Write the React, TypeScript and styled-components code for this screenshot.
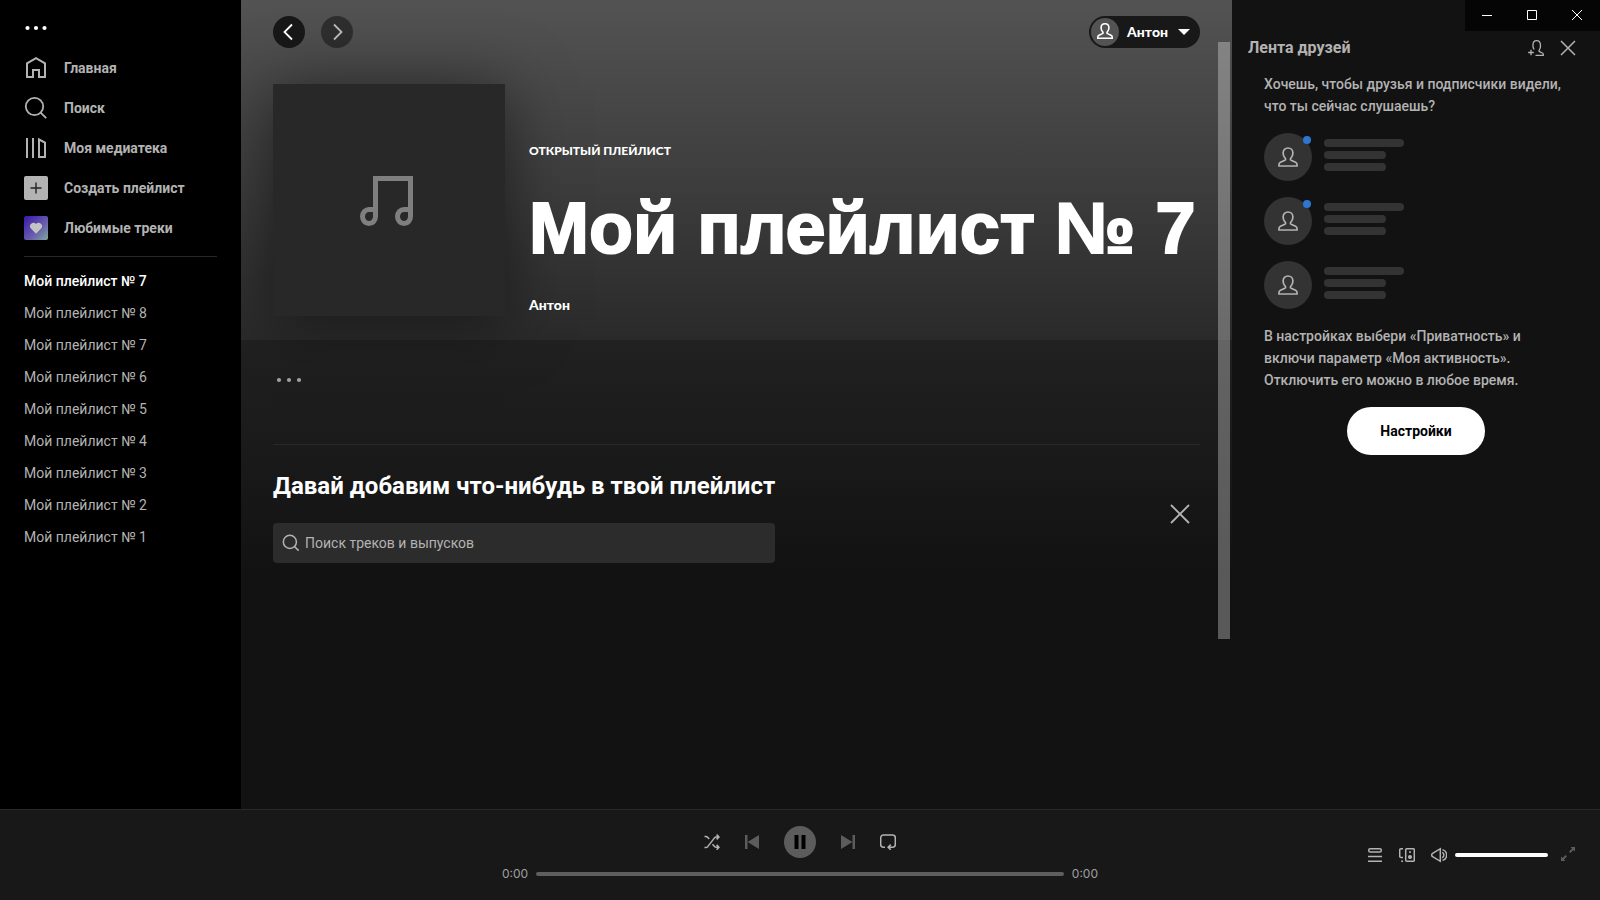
import React from "react";
import styled, { createGlobalStyle } from "styled-components";

const GlobalStyle = createGlobalStyle`
  *, *::before, *::after { box-sizing: border-box; }
  body {
    margin: 0;
    background: #121212;
    color: #fff;
    font-family: Roboto, "Liberation Sans", sans-serif;
    font-size: 14px;
    line-height: 16px;
  }
  h1, h2, p, ul { margin: 0; padding: 0; }
  ul { list-style: none; }
  a { color: inherit; text-decoration: none; }
  button {
    border: 0;
    padding: 0;
    background: none;
    color: inherit;
    font: inherit;
    cursor: pointer;
  }
  svg { display: block; flex: none; }
`;

const displayFont = `Lato, "Liberation Sans", sans-serif`;

const Page = styled.div`
  display: grid;
  grid-template-columns: 241px minmax(0, 1fr) 368px;
  grid-template-rows: minmax(0, 1fr) auto;
  min-height: 100vh;
`;

/* ---------- Sidebar ---------- */

const Sidebar = styled.nav`
  background: #000;
  padding: 16px 24px 24px;
  color: #b3b3b3;
`;

const MenuButton = styled.button`
  display: block;
  height: 24px;
  color: #fff;
`;

const NavList = styled.ul`
  padding: 8px 0;
  font-weight: 700;
`;

const NavLink = styled.a`
  display: flex;
  align-items: center;
  gap: 16px;
  height: 40px;
`;

const NavTile = styled.span<{ $liked?: boolean }>`
  display: grid;
  place-items: center;
  width: 24px;
  height: 24px;
  border-radius: 2px;
  background: ${(p) =>
    p.$liked ? "linear-gradient(135deg, #3a16a8, #6a5fae 60%, #7fa79b)" : "#b3b3b3"};
  color: ${(p) => (p.$liked ? "#c4c4c4" : "#222")};
`;

const PlaylistList = styled.ul`
  border-top: 1px solid #282828;
  padding-top: 8px;
`;

const PlaylistLink = styled.a<{ $active?: boolean }>`
  display: block;
  line-height: 32px;
  white-space: nowrap;
  font-weight: ${(p) => (p.$active ? 500 : 400)};
  color: ${(p) => (p.$active ? "#fff" : "#b3b3b3")};
`;

/* ---------- Main ---------- */

const Main = styled.main`
  position: relative;
  background: #121212;
`;

const Hero = styled.header`
  display: flex;
  flex-direction: column;
  gap: 36px;
  padding: 16px 32px 24px;
  background: linear-gradient(#535353, #2a2a2a);
`;

const TopBar = styled.div`
  display: flex;
  align-items: center;
  gap: 16px;
`;

const RoundButton = styled.button<{ $dim?: boolean }>`
  display: grid;
  place-items: center;
  width: 32px;
  height: 32px;
  border-radius: 50%;
  background: #181818;
  opacity: ${(p) => (p.$dim ? 0.6 : 1)};
`;

const UserButton = styled.button`
  display: flex;
  align-items: center;
  gap: 8px;
  height: 32px;
  margin-left: auto;
  padding: 0 10px 0 2px;
  border-radius: 16px;
  background: #181818;
  font-family: ${displayFont};
  font-weight: 900;
`;

const UserAvatar = styled.span`
  display: grid;
  place-items: center;
  width: 28px;
  height: 28px;
  padding-bottom: 2px;
  border-radius: 50%;
  background: #535353;
`;

const UserName = styled.span`
  padding-right: 2px;
`;

const PlaylistInfo = styled.div`
  display: flex;
  gap: 24px;
`;

const Cover = styled.div`
  display: grid;
  place-items: center;
  flex: none;
  width: 232px;
  height: 232px;
  background: #282828;
  box-shadow: 0 4px 60px rgba(0, 0, 0, 0.5);
  color: #7f7f7f;
`;

const InfoText = styled.div`
  display: flex;
  flex-direction: column;
  justify-content: flex-end;
  min-width: 0;
  white-space: nowrap;
`;

const Kind = styled.p`
  font-family: ${displayFont};
  font-size: 12px;
  font-weight: 900;
`;

const Title = styled.h1`
  padding: 25px 0 22px;
  font-family: "Liberation Sans", Arial, sans-serif;
  font-size: 72px;
  line-height: 88px;
  font-weight: 700;
  -webkit-text-stroke: 2px #fff;
`;

const Owner = styled.a`
  font-family: ${displayFont};
  line-height: 22px;
  font-weight: 900;
`;

const Body = styled.div`
  padding: 24px 32px;
  background: linear-gradient(#212121, #121212 232px);
`;

const MoreButton = styled.button`
  display: block;
  height: 32px;
  color: #a0a0a0;
`;

const AddSection = styled.section`
  display: flex;
  align-items: center;
  justify-content: space-between;
  margin-top: 48px;
  padding: 20px 10px 0 0;
  border-top: 1px solid #292929;
`;

const AddForm = styled.form`
  display: flex;
  flex-direction: column;
  gap: 16px;
`;

const AddHeading = styled.h2`
  font-size: 24px;
  line-height: 42px;
  font-weight: 700;
  white-space: nowrap;
`;

const SearchBox = styled.label`
  display: flex;
  align-items: center;
  gap: 5px;
  height: 40px;
  padding: 0 9px;
  border-radius: 4px;
  background: #2c2c2c;
  color: #b3b3b3;
`;

const SearchInput = styled.input`
  flex: 1;
  min-width: 0;
  border: 0;
  padding: 0;
  outline: 0;
  background: none;
  color: #fff;
  font: inherit;
  &::placeholder { color: #b3b3b3; opacity: 1; }
`;

const CloseButton = styled.button`
  color: #b3b3b3;
`;

const ScrollThumb = styled.div`
  position: absolute;
  top: 42px;
  right: 2px;
  width: 12px;
  height: 597px;
  background: rgba(255, 255, 255, 0.3);
`;

/* ---------- Friends ---------- */

const Friends = styled.aside`
  padding-bottom: 24px;
  background: #121212;
  color: #b3b3b3;
`;

const WindowBar = styled.div`
  display: flex;
  justify-content: flex-end;
`;

const WindowControls = styled.div`
  display: grid;
  grid-template-columns: repeat(3, 1fr);
  width: 135px;
  height: 31px;
  padding-right: 1px;
  background: #050505;
  color: #fff;
`;

const WindowButton = styled.button`
  display: grid;
  place-items: center;
  height: 30px;
`;

const FriendsHeader = styled.div`
  display: flex;
  align-items: center;
  gap: 16px;
  height: 34px;
  padding: 0 24px 0 16px;
`;

const FriendsTitle = styled.h2`
  flex: 1;
  font-size: 16px;
  line-height: 24px;
  font-weight: 700;
`;

const FriendsBody = styled.div`
  display: flex;
  flex-direction: column;
  gap: 16px;
  padding: 8px 32px 0;
`;

const Note = styled.p`
  line-height: 22px;
  font-weight: 500;
`;

const FriendRows = styled.ul`
  display: flex;
  flex-direction: column;
  gap: 16px;
`;

const FriendRow = styled.li`
  display: flex;
  align-items: center;
  gap: 12px;
`;

const FriendAvatar = styled.span`
  position: relative;
  display: grid;
  place-items: center;
  width: 48px;
  height: 48px;
  border-radius: 50%;
  background: #333;
`;

const OnlineDot = styled.span`
  position: absolute;
  top: 3px;
  right: 1px;
  width: 8px;
  height: 8px;
  border-radius: 50%;
  background: #2e77d0;
`;

const Bars = styled.span`
  display: grid;
  gap: 4px;
  margin-bottom: 4px;
`;

const Bar = styled.span<{ $long?: boolean }>`
  width: ${(p) => (p.$long ? 80 : 62)}px;
  height: 8px;
  border-radius: 4px;
  background: #333;
`;

const SettingsButton = styled.button`
  align-self: center;
  height: 48px;
  padding: 0 33px;
  border-radius: 24px;
  background: #fff;
  color: #000;
  font-weight: 700;
`;

/* ---------- Player ---------- */

const Player = styled.footer`
  grid-column: 1 / -1;
  display: grid;
  grid-template-columns: 1fr minmax(0, 596px) 1fr;
  align-items: center;
  height: 91px;
  border-top: 1px solid #282828;
  background: #181818;
  color: #b3b3b3;
`;

const Transport = styled.div`
  grid-column: 2;
  display: flex;
  flex-direction: column;
  gap: 8px;
  padding-bottom: 2px;
`;

const Controls = styled.div`
  display: flex;
  align-items: center;
  justify-content: center;
  gap: 24px;
`;

const IconButton = styled.button<{ $dim?: boolean }>`
  color: ${(p) => (p.$dim ? "#5c5c5c" : "#b3b3b3")};
`;

const PlayButton = styled.button`
  display: grid;
  place-items: center;
  width: 32px;
  height: 32px;
  border-radius: 50%;
  background: #5c5c5c;
  color: #000;
`;

const Timeline = styled.div`
  display: flex;
  align-items: center;
  gap: 8px;
  font-family: Inter, "Liberation Sans", sans-serif;
  font-size: 12px;
  color: #a0a0a0;
`;

const Slider = styled.input<{ $color: string }>`
  appearance: none;
  flex: 1;
  width: 100%;
  min-width: 0;
  height: 4px;
  margin: 0;
  border-radius: 2px;
  background: ${(p) => p.$color};
  &::-webkit-slider-thumb {
    appearance: none;
    width: 0;
    height: 0;
  }
`;

const Extras = styled.div`
  justify-self: end;
  display: flex;
  align-items: center;
  gap: 16px;
  width: 233px;
  padding-right: 24px;
`;

const VolumeGroup = styled.div`
  flex: 1;
  display: flex;
  align-items: center;
  gap: 8px;
  min-width: 0;
  margin-right: -4px;
`;

/* ---------- Icons ---------- */

const Dots = ({ wide, label }: { wide?: boolean; label: string }) => {
  const width = wide ? 32 : 24;
  const step = wide ? 10 : 8.5;
  return (
    <svg width={width} height="24" viewBox={`0 0 ${width} 24`} fill="currentColor" aria-label={label}>
      {[-1, 0, 1].map((n) => (
        <circle key={n} cx={width / 2 + n * step} cy="12" r="2.1" />
      ))}
    </svg>
  );
};

const HomeIcon = () => (
  <svg width="24" height="24" viewBox="0 0 24 24" fill="none" stroke="currentColor" strokeWidth="2">
    <path d="M3 21V7.3L12 2.1l9 5.2V21h-6v-7H9v7z" />
  </svg>
);

const SearchIcon = ({ size = 24 }: { size?: number }) => (
  <svg width={size} height={size} viewBox="0 0 24 24" fill="none" stroke="currentColor" strokeWidth={size < 24 ? 2 : 1.8}>
    <circle cx="10.5" cy="10.5" r="8.7" />
    <path d="M16.6 16.6l5.6 5.6" />
  </svg>
);

const LibraryIcon = () => (
  <svg width="24" height="24" viewBox="0 0 24 24" fill="none" stroke="currentColor" strokeWidth="2">
    <path d="M3 2v20M9 2v20M15 3.5V21h6V6.6z" />
  </svg>
);

const PlusIcon = () => (
  <svg width="12" height="12" viewBox="0 0 12 12" stroke="currentColor" strokeWidth="1.4">
    <path d="M6 .5v11M.5 6h11" />
  </svg>
);

const HeartIcon = () => (
  <svg width="12" height="12" viewBox="0 0 12 12" fill="currentColor">
    <path d="M6 11.8L.9 6.5A3.3 3.3 0 0 1 6 2a3.3 3.3 0 0 1 5.1 4.5z" />
  </svg>
);

const ChevronIcon = ({ right }: { right?: boolean }) => (
  <svg width="24" height="24" viewBox="0 0 24 24" fill="none" stroke="currentColor" strokeWidth="1.8">
    <path d={right ? "M9 4.5l7.5 7.5L9 19.5" : "M15 4.5L7.5 12l7.5 7.5"} />
  </svg>
);

const PersonIcon = ({ size = 20 }: { size?: number }) => (
  <svg width={size} height={size} viewBox="0 0 20 20" fill="none" stroke="currentColor" strokeWidth={size < 20 ? 2 : 1.7}>
    <path d="M1 19v-1.4c0-1 .6-1.9 1.5-2.3l4.3-2c.8-.4 1-1.2.5-1.9C5.9 9.9 5.1 8 5.1 6c0-3 2.1-5 4.9-5s4.900 2 4.900 5c0 2-.8 3.900-2.200 5.400-.5.7-.3 1.500.5 1.900l4.300 2c.9.400 1.500 1.300 1.500 2.300V19z" />
  </svg>
);

const AddPersonIcon = () => (
  <svg width="16" height="16" viewBox="0 0 16 16" fill="none" stroke="currentColor" strokeWidth="1.3">
    <path d="M7.5 15.3h7.8v-.9c0-.6-.3-1.1-.9-1.4l-2.9-1.400c-.6-.3-.7-.9-.3-1.400.8-1.100 1.300-2.500 1.300-4.200C12.500 2.700 11.200.7 8.700.7S4.900 2.700 4.900 5.300c0 1.700.4 3 1.200 4.200M.2 12.500h5.600M3 9.700v5.600" />
  </svg>
);

const CrossIcon = ({ size, weight = 1.5 }: { size: number; weight?: number }) => (
  <svg width={size} height={size} viewBox={`0 0 ${size} ${size}`} stroke="currentColor" strokeWidth={weight}>
    <path d={`M1 1L${size - 1} ${size - 1}M${size - 1} 1L1 ${size - 1}`} />
  </svg>
);

const NoteIcon = () => (
  <svg width="60" height="52" viewBox="-1 -2 60 52" fill="none" stroke="currentColor" strokeWidth="5">
    <path d="M15.5 41V2.5h35V41" />
    <path d="M15.5 33.5H9a6.500 7 0 1 0 6.500 7z" />
    <path d="M50.5 33.5H44a6.500 7 0 1 0 6.500 7z" />
  </svg>
);

const ShuffleIcon = () => (
  <svg width="16" height="16" viewBox="0 0 16 16" fill="none" stroke="currentColor" strokeWidth="1.5">
    <path d="M.5 2.5h1.2c.9 0 1.6.4 2.2 1.1l1.3 1.5M.5 13.5h1.2c.9 0 1.6-.4 2.2-1.1l6.4-8.300c.6-.7 1.300-1.100 2.200-1.100h2.300M8.500 10.200l1.800 2c.6.7 1.300 1.100 2.200 1.100h2.300M12.600.6L15 3l-2.400 2.400M12.600 10.900l2.400 2.400-2.400 2.400" />
  </svg>
);

const SkipIcon = ({ next }: { next?: boolean }) => (
  <svg width="16" height="16" viewBox="0 0 16 16" fill="currentColor">
    <path d={next ? "M1 1l11.5 7L1 15zM12.5 1H15v14h-2.5z" : "M15 1L3.5 8 15 15zM1 1h2.5v14H1z"} />
  </svg>
);

const PauseIcon = () => (
  <svg width="16" height="16" viewBox="0 0 16 16" fill="currentColor">
    <path d="M2.5 1H6.5v14h-4zM9.5 1h4v14h-4z" />
  </svg>
);

const RepeatIcon = () => (
  <svg width="16" height="16" viewBox="0 0 16 16" fill="none" stroke="currentColor" strokeWidth="1.5">
    <path d="M5 13.3H3.5a2.8 2.8 0 0 1-2.8-2.8v-6.7A2.8 2.8 0 0 1 3.5 1h9a2.8 2.8 0 0 1 2.8 2.8v6.7a2.8 2.8 0 0 1-2.8 2.8H8.3M10.8 10.6l-2.7 2.7 2.7 2.5" />
  </svg>
);

const QueueIcon = () => (
  <svg width="16" height="16" viewBox="0 0 16 16" fill="none" stroke="currentColor" strokeWidth="1.5">
    <rect x="1.7" y="1.7" width="12.6" height="3.3" rx="1.6" />
    <path d="M1 9.5h14M1 14.3h14" />
  </svg>
);

const DevicesIcon = () => (
  <svg width="16" height="16" viewBox="0 0 16 16" fill="none" stroke="currentColor" strokeWidth="1.5">
    <path d="M4 1.7H2A1.3 1.3 0 0 0 .7 3v6.2c0 .7.6 1.3 1.3 1.3h2M2.2 14.3H4" />
    <rect x="6.7" y="1.7" width="8.6" height="12.6" rx="1" />
    <circle cx="11" cy="10" r="1.3" fill="currentColor" />
    <circle cx="11" cy="5" r="1" fill="currentColor" stroke="none" />
  </svg>
);

const VolumeIcon = () => (
  <svg width="16" height="16" viewBox="0 0 16 16" fill="none" stroke="currentColor" strokeWidth="1.5">
    <path d="M9.3 1.7v12.6L1.6 9.7a2 2 0 0 1 0-3.4zM11.2 5.3a3 3 0 0 1 0 5.4M11.5 2.6a5.6 5.6 0 0 1 0 10.8" />
  </svg>
);

const ExpandIcon = () => (
  <svg width="16" height="16" viewBox="0 0 16 16" fill="currentColor">
    <path d="M10.5 0H15v4.5l-1.6-1.6-3 3-1.300-1.300 3-3zM1 9.500l1.600 1.600 3-3 1.300 1.300-3 3L5.500 14H1z" />
  </svg>
);

/* ---------- App ---------- */

const playlists = [7, 8, 7, 6, 5, 4, 3, 2, 1];
const friends = [true, true, false];

export default function App() {
  return (
    <>
      <GlobalStyle />
      <Page>
        <Sidebar>
          <MenuButton type="button">
            <Dots label="Меню" />
          </MenuButton>
          <NavList>
            <li><NavLink href="#home"><HomeIcon />Главная</NavLink></li>
            <li><NavLink href="#search"><SearchIcon />Поиск</NavLink></li>
            <li><NavLink href="#library"><LibraryIcon />Моя медиатека</NavLink></li>
            <li><NavLink href="#create"><NavTile><PlusIcon /></NavTile>Создать плейлист</NavLink></li>
            <li><NavLink href="#liked"><NavTile $liked><HeartIcon /></NavTile>Любимые треки</NavLink></li>
          </NavList>
          <PlaylistList>
            {playlists.map((n, i) => (
              <li key={i}>
                <PlaylistLink href={`#playlist-${i}`} $active={i === 0}>Мой плейлист № {n}</PlaylistLink>
              </li>
            ))}
          </PlaylistList>
        </Sidebar>

        <Main>
          <Hero>
            <TopBar>
              <RoundButton type="button" aria-label="Назад"><ChevronIcon /></RoundButton>
              <RoundButton type="button" aria-label="Вперёд" $dim><ChevronIcon right /></RoundButton>
              <UserButton type="button">
                <UserAvatar><PersonIcon size={16} /></UserAvatar>
                <UserName>Антон</UserName>
                <svg width="12" height="6" viewBox="0 0 12 6" fill="currentColor"><path d="M0 0h12L6 6z" /></svg>
              </UserButton>
            </TopBar>
            <PlaylistInfo>
              <Cover><NoteIcon /></Cover>
              <InfoText>
                <Kind>ОТКРЫТЫЙ ПЛЕЙЛИСТ</Kind>
                <Title>Мой плейлист № 7</Title>
                <Owner href="#user">Антон</Owner>
              </InfoText>
            </PlaylistInfo>
          </Hero>
          <Body>
            <MoreButton type="button"><Dots wide label="Ещё" /></MoreButton>
            <AddSection>
              <AddForm>
                <AddHeading>Давай добавим что-нибудь в твой плейлист</AddHeading>
                <SearchBox>
                  <SearchIcon size={18} />
                  <SearchInput type="text" placeholder="Поиск треков и выпусков" aria-label="Поиск треков и выпусков" />
                </SearchBox>
              </AddForm>
              <CloseButton type="button" aria-label="Закрыть"><CrossIcon size={20} weight={1.8} /></CloseButton>
            </AddSection>
          </Body>
          <ScrollThumb />
        </Main>

        <Friends>
          <WindowBar>
            <WindowControls>
              <WindowButton type="button" aria-label="Свернуть">
                <svg width="10" height="10" viewBox="0 0 10 10" stroke="currentColor"><path d="M0 5.5h10" /></svg>
              </WindowButton>
              <WindowButton type="button" aria-label="Развернуть">
                <svg width="10" height="10" viewBox="0 0 10 10" stroke="currentColor" fill="none"><path d="M.5.5h9v9h-9z" /></svg>
              </WindowButton>
              <WindowButton type="button" aria-label="Закрыть окно"><CrossIcon size={12} weight={1} /></WindowButton>
            </WindowControls>
          </WindowBar>
          <FriendsHeader>
            <FriendsTitle>Лента друзей</FriendsTitle>
            <CloseButton type="button" aria-label="Добавить друга"><AddPersonIcon /></CloseButton>
            <CloseButton type="button" aria-label="Закрыть ленту"><CrossIcon size={16} /></CloseButton>
          </FriendsHeader>
          <FriendsBody>
            <Note>Хочешь, чтобы друзья и подписчики видели, что ты сейчас слушаешь?</Note>
            <FriendRows>
              {friends.map((online, i) => (
                <FriendRow key={i}>
                  <FriendAvatar><PersonIcon />{online && <OnlineDot />}</FriendAvatar>
                  <Bars><Bar $long /><Bar /><Bar /></Bars>
                </FriendRow>
              ))}
            </FriendRows>
            <Note>В настройках выбери «Приватность» и включи параметр «Моя активность». Отключить его можно в любое время.</Note>
            <SettingsButton type="button">Настройки</SettingsButton>
          </FriendsBody>
        </Friends>

        <Player>
          <Transport>
            <Controls>
              <IconButton type="button" aria-label="Перемешать"><ShuffleIcon /></IconButton>
              <IconButton type="button" aria-label="Предыдущий" $dim><SkipIcon /></IconButton>
              <PlayButton type="button" aria-label="Пауза"><PauseIcon /></PlayButton>
              <IconButton type="button" aria-label="Следующий" $dim><SkipIcon next /></IconButton>
              <IconButton type="button" aria-label="Повтор"><RepeatIcon /></IconButton>
            </Controls>
            <Timeline>
              <span>0:00</span>
              <Slider type="range" min="0" max="100" defaultValue="0" aria-label="Позиция" $color="#5e5e5e" />
              <span>0:00</span>
            </Timeline>
          </Transport>
          <Extras>
            <IconButton type="button" aria-label="Очередь"><QueueIcon /></IconButton>
            <IconButton type="button" aria-label="Устройства"><DevicesIcon /></IconButton>
            <VolumeGroup>
              <IconButton type="button" aria-label="Звук"><VolumeIcon /></IconButton>
              <Slider type="range" min="0" max="100" defaultValue="100" aria-label="Громкость" $color="#fff" />
            </VolumeGroup>
            <IconButton type="button" aria-label="На весь экран" $dim><ExpandIcon /></IconButton>
          </Extras>
        </Player>
      </Page>
    </>
  );
}
